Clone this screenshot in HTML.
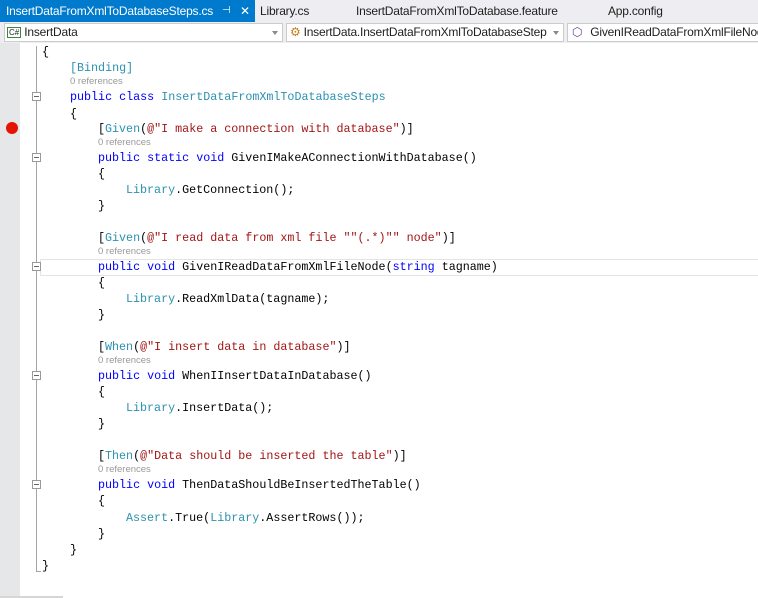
<!DOCTYPE html>
<html><head><meta charset="utf-8"><style>
*{margin:0;padding:0;box-sizing:border-box}
body{width:758px;height:598px;overflow:hidden;background:#fff;position:relative;font-family:"Liberation Sans",sans-serif}
.tabs{position:absolute;left:0;top:0;width:758px;height:22px;background:#eeeef2}
.tab{position:absolute;top:0;height:22px;font-size:12px;line-height:22px;color:#1e1e1e;white-space:nowrap;letter-spacing:-0.2px}
.act{left:0;width:255px;background:#007acc;color:#fff;padding-left:6px}
.nav{position:absolute;left:0;top:22px;width:758px;height:21px;background:#eeeef2}
.cb{position:absolute;top:1px;height:19px;background:#fff;border:1px solid #ccc;font-size:12px;line-height:17px;color:#1e1e1e;white-space:nowrap;overflow:hidden;letter-spacing:-0.2px}
.arr{position:absolute;right:4px;top:7px;border:3px solid transparent;border-top:4px solid #888}
.margin{position:absolute;left:0;top:43px;width:20px;height:555px;background:#e6e7e8}
.code{position:absolute;font-family:"Liberation Mono",monospace;font-size:11.7px;line-height:16px;height:16px;white-space:pre;color:#000}
.ref{position:absolute;font-size:9.5px;color:#999;line-height:12px}
.k{color:#0000ff}.t{color:#2b91af}.s{color:#a31515}
.box{position:absolute;left:32px;width:9px;height:9px;border:1px solid #999;background:#fff}
.box:after{content:"";position:absolute;left:1px;top:3px;width:5px;height:1px;background:#666}
</style></head><body>
<div class="tabs">
<div class="tab act">InsertDataFromXmlToDatabaseSteps.cs<span style="position:absolute;left:222px;font-size:10px">⊣</span><span style="position:absolute;left:240px">✕</span></div>
<div class="tab" style="left:260px">Library.cs</div>
<div class="tab" style="left:356px">InsertDataFromXmlToDatabase.feature</div>
<div class="tab" style="left:608px">App.config</div>
</div>
<div class="nav">
<div class="cb" style="left:4px;width:279px"><span style="display:inline-block;border:1px solid #388a34;font-size:8px;line-height:9px;padding:0 1px;margin:0 3px 0 2px;vertical-align:1px;letter-spacing:0">C#</span>InsertData<div class="arr"></div></div>
<div class="cb" style="left:286px;width:278px"><span style="color:#c27d1a;margin:0 3px 0 3px">⚙</span>InsertData.InsertDataFromXmlToDatabaseStep<div class="arr"></div></div>
<div class="cb" style="left:567px;width:200px;border-right:none"><span style="color:#6c3b9b;margin:0 8px 0 4px">⬡</span>GivenIReadDataFromXmlFileNode</div>
</div>
<div class="margin"></div>
<div style="position:absolute;top:122px;width:12px;height:12px;border-radius:50%;background:#e51400;left:6px"></div>
<div style="position:absolute;left:36px;top:46px;width:1px;height:526px;background:#a5a5a5"></div>
<div style="position:absolute;left:36px;top:571px;width:5px;height:1px;background:#a5a5a5"></div>
<div style="position:absolute;left:40px;top:259px;width:718px;height:17px;border:1px solid #e4e4e4;border-right:none"></div>
<div class="box" style="top:92px"></div>
<div class="box" style="top:153px"></div>
<div class="box" style="top:262px"></div>
<div class="box" style="top:371px"></div>
<div class="box" style="top:480px"></div>
<div style="position:absolute;left:0;top:596px;width:63px;height:2px;background:#d6d6d6"></div>

<div class="code" style="left:42px;top:44px">{</div>
<div class="code" style="left:70px;top:60px"><span class="t">[Binding]</span></div>
<div class="ref" style="left:70px;top:76px">0 references</div>
<div class="code" style="left:70px;top:89px"><span class="k">public class</span> <span class="t">InsertDataFromXmlToDatabaseSteps</span></div>
<div class="code" style="left:70px;top:106px">{</div>
<div class="code" style="left:98px;top:121px">[<span class="t">Given</span>(<span class="s">@"I make a connection with database"</span>)]</div>
<div class="ref" style="left:98px;top:137px">0 references</div>
<div class="code" style="left:98px;top:150px"><span class="k">public static void</span> GivenIMakeAConnectionWithDatabase()</div>
<div class="code" style="left:98px;top:166px">{</div>
<div class="code" style="left:126px;top:182px"><span class="t">Library</span>.GetConnection();</div>
<div class="code" style="left:98px;top:198px">}</div>
<div class="code" style="left:98px;top:230px">[<span class="t">Given</span>(<span class="s">@"I read data from xml file ""(.*)"" node"</span>)]</div>
<div class="ref" style="left:98px;top:246px">0 references</div>
<div class="code" style="left:98px;top:259px"><span class="k">public void</span> GivenIReadDataFromXmlFileNode(<span class="k">string</span> tagname)</div>
<div class="code" style="left:98px;top:275px">{</div>
<div class="code" style="left:126px;top:291px"><span class="t">Library</span>.ReadXmlData(tagname);</div>
<div class="code" style="left:98px;top:307px">}</div>
<div class="code" style="left:98px;top:339px">[<span class="t">When</span>(<span class="s">@"I insert data in database"</span>)]</div>
<div class="ref" style="left:98px;top:355px">0 references</div>
<div class="code" style="left:98px;top:368px"><span class="k">public void</span> WhenIInsertDataInDatabase()</div>
<div class="code" style="left:98px;top:384px">{</div>
<div class="code" style="left:126px;top:400px"><span class="t">Library</span>.InsertData();</div>
<div class="code" style="left:98px;top:416px">}</div>
<div class="code" style="left:98px;top:448px">[<span class="t">Then</span>(<span class="s">@"Data should be inserted the table"</span>)]</div>
<div class="ref" style="left:98px;top:464px">0 references</div>
<div class="code" style="left:98px;top:477px"><span class="k">public void</span> ThenDataShouldBeInsertedTheTable()</div>
<div class="code" style="left:98px;top:493px">{</div>
<div class="code" style="left:126px;top:510px"><span class="t">Assert</span>.True(<span class="t">Library</span>.AssertRows());</div>
<div class="code" style="left:98px;top:526px">}</div>
<div class="code" style="left:70px;top:542px">}</div>
<div class="code" style="left:42px;top:558px">}</div>
</body></html>
